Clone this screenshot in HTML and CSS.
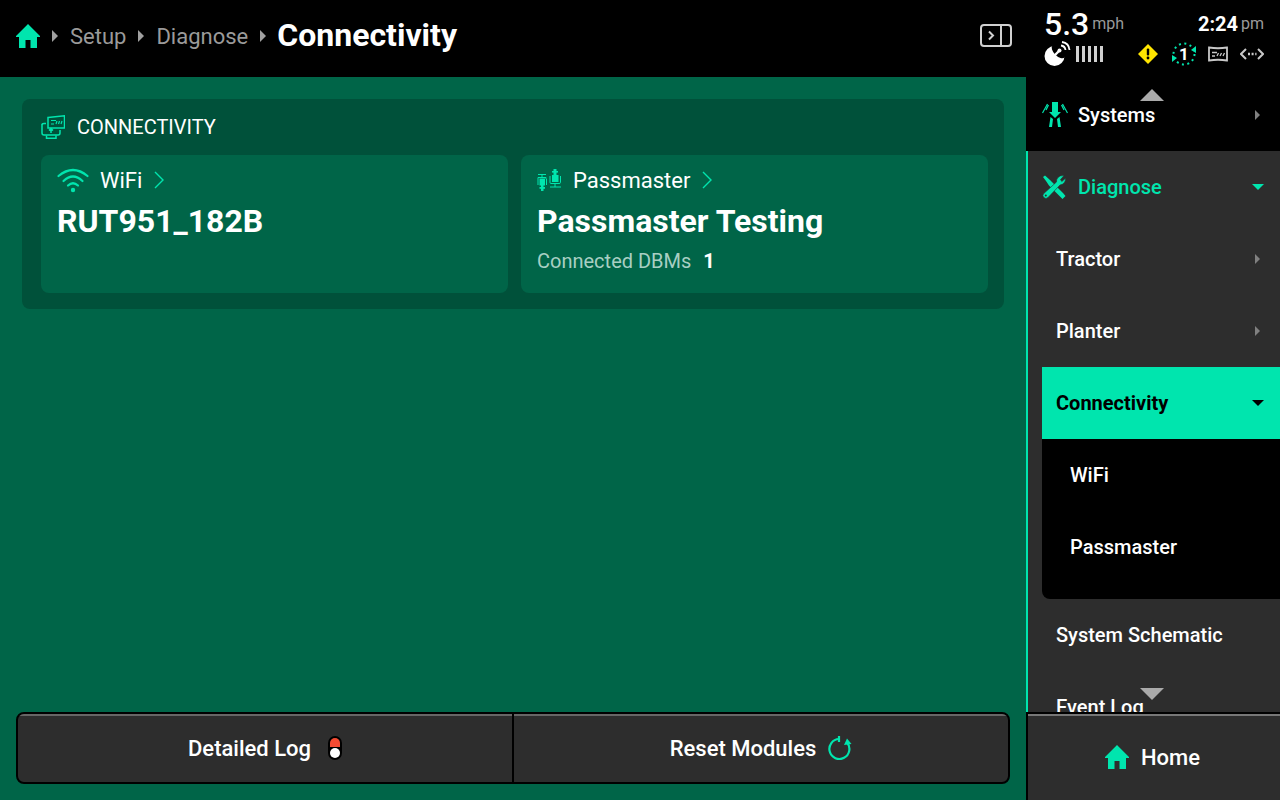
FILE: index.html
```html
<!DOCTYPE html>
<html lang="en">
<head>
    <meta charset="UTF-8">
    <title>Connectivity</title>
    <link rel="stylesheet" href="styles.css">
</head>
<body>
    <div class="app">
        <div class="left">
            <!-- Breadcrumb -->
            <header class="topbar">
                <svg class="home-icon" viewBox="0 0 24 24"><path d="M12 0 L24 12 V13 H21 V24 H14.5 V16 H9.5 V24 H3 V13 H0 V12 Z"/></svg>
                <span class="crumb-arrow"></span>
                <span class="crumb">Setup</span>
                <span class="crumb-arrow"></span>
                <span class="crumb">Diagnose</span>
                <span class="crumb-arrow"></span>
                <span class="crumb-current">Connectivity</span>
                <svg class="panel-toggle" viewBox="0 0 32 24" fill="none" stroke="#d0d0d0" stroke-width="2"><rect x="1" y="1" width="30" height="21" rx="3"/><path d="M21 1 V22"/><path d="M9 7.5 L13 11.5 L9 15.5"/></svg>
            </header>

            <main class="content">
                <section class="panel">
                    <div class="panel-title">
                        <svg class="title-icon" viewBox="0 0 24 24" fill="none" stroke="#00e5ae" stroke-width="1.5"><path d="M7 2.5 L23.5 0.8 V13 L7 13 Z"/><path d="M10 5.5 H15 M10 9 H13 M15 9 L16 6 M17.5 9 L18.5 6 M20 9 L21 6" stroke-width="1.2"/><path d="M1 9.5 V18 Q1 20 3 20 H17 Q19 20 19 18 V15"/><path d="M1 10 Q1 8.5 3 8.5 H5"/><path d="M10 18 V13.5 M8 15.5 L10 13.5 L12 15.5"/><path d="M5.5 20.5 V23.3 H15 V20.5"/></svg>
                        <span>CONNECTIVITY</span>
                    </div>
                    <div class="cards">
                        <div class="card">
                            <div class="card-head wifi-head">
                                <svg class="wifi-icon" viewBox="0 0 32 26" fill="none" stroke="#00e5ae" stroke-width="2.2" stroke-linecap="round"><path d="M1.5 9 Q16 -3 30.5 9"/><path d="M6.5 14 Q16 5 25.5 14"/><path d="M11 18.5 Q16 14 21 18.5"/><circle cx="16" cy="23" r="2.2" fill="#00e5ae" stroke="none"/></svg>
                                <span>WiFi</span>
                                <svg class="chev" viewBox="0 0 10 18" fill="none" stroke="#00e5ae" stroke-width="1.4"><path d="M1 1 L9 9 L1 17"/></svg>
                            </div>
                            <div class="card-value">RUT951_182B</div>
                        </div>
                        <div class="card">
                            <div class="card-head">
                                <svg class="pass-icon" viewBox="0 0 26 24" fill="none" stroke="#00e5ae" stroke-width="1"><path d="M1 6.5 H9 M5 6.5 V9"/><path d="M1 11 V9.5 H9 V11"/><rect x="2.5" y="10.5" width="5.5" height="7" fill="#00e5ae" stroke="none"/><rect x="4" y="17" width="2.5" height="6" fill="#00e5ae" stroke="none"/><rect x="2.5" y="19" width="5.5" height="1.8" fill="#00e5ae" stroke="none"/><path d="M1 11 V17 M9.5 11 V17"/><rect x="16.5" y="1" width="3" height="7" fill="#00e5ae" stroke="none"/><rect x="15" y="3" width="6" height="1.6" fill="#00e5ae" stroke="none"/><rect x="15" y="7" width="6.5" height="7" fill="#00e5ae" stroke="none"/><path d="M13 8 V14.5 Q13 15.5 14 15.5 H22 Q23.5 15.5 23.5 14.5 V8"/><path d="M18 15.5 V19 M13 19 H24"/></svg>
                                <span>Passmaster</span>
                                <svg class="chev" viewBox="0 0 10 18" fill="none" stroke="#00e5ae" stroke-width="1.4"><path d="M1 1 L9 9 L1 17"/></svg>
                            </div>
                            <div class="card-value">Passmaster Testing</div>
                            <div class="card-meta"><span>Connected DBMs</span><b>1</b></div>
                        </div>
                    </div>
                </section>

                <div class="actions">
                    <button type="button" class="action log-action">
                        Detailed Log
                        <svg class="log-icon" viewBox="0 0 14 24"><rect x="0" y="0" width="14" height="24" rx="7" fill="#000"/><path d="M2 11 V7 a5 5 0 0 1 10 0 V11 Z" fill="#f44b32"/><circle cx="7" cy="17" r="5" fill="#fff"/></svg>
                    </button>
                    <button type="button" class="action reset-action">
                        Reset Modules
                        <svg class="reset-icon" viewBox="0 0 24 24" fill="none" stroke="#00e5ae" stroke-width="2.2"><path d="M11 3 A10 10 0 1 0 19 6.5"/><path d="M11 0 V6"/><path d="M19 2.5 L23.5 8 L16 9 Z" fill="#00e5ae" stroke="none"/></svg>
                    </button>
                </div>
            </main>
        </div>

        <aside class="side">
            <div class="status">
                <div class="status-row">
                    <div class="status-pair"><span class="speed">5.3</span><span class="unit speed-unit">mph</span></div>
                    <div class="status-pair"><span class="clock">2:24</span><span class="unit">pm</span></div>
                </div>
                <div class="status-row icons-row">
                    <div class="gps">
                        <svg class="dish" viewBox="0 0 28 26"><circle cx="10.5" cy="15" r="10" fill="#fff"/><ellipse cx="14.5" cy="10.5" rx="8.5" ry="4.5" transform="rotate(45 14.5 10.5)" fill="#000"/><path d="M9.5 15.5 L15 10" stroke="#fff" stroke-width="2.4"/><circle cx="15.5" cy="9.5" r="2" fill="#fff"/><path d="M17 4.5 Q21 5 21.5 9 M18 1 Q25 2 25.5 9" fill="none" stroke="#fff" stroke-width="1.8"/></svg>
                        <div class="bars"><i></i><i></i><i></i><i></i><i></i></div>
                    </div>
                    <div class="status-icons">
                        <svg class="warn" viewBox="0 0 20 20"><path d="M10 0 L20 10 L10 20 L0 10 Z" fill="#ffe500"/><rect x="8.8" y="4.5" width="2.4" height="7" rx="1" fill="#000"/><circle cx="10" cy="14" r="1.4" fill="#000"/></svg>
                        <div class="cycle">
                            <svg viewBox="0 0 24 24" fill="none"><circle cx="12" cy="12" r="10.5" stroke="#00e5ae" stroke-width="2" stroke-dasharray="2 3.5"/><path d="M24 4 V11 L19 8 Z M0 20 V13 L5 16 Z" fill="#00e5ae"/></svg>
                            <span>1</span>
                        </div>
                        <svg class="screen" viewBox="0 0 20 16" fill="none" stroke="#c8c8c8" stroke-width="1.8"><path d="M1 1.5 Q10 3 19 1.5 V14.5 Q10 13 1 14.5 Z"/><path d="M4 6.500 H9 M4 10 H7 M9 10 L10.5 7 M12 10 L13.5 7 M15 10 L16.5 7" stroke-width="1.3"/></svg>
                        <svg class="link" viewBox="0 0 24 12" fill="none" stroke="#c8c8c8" stroke-width="2"><path d="M6 1 L1 6 L6 11 M18 1 L23 6 L18 11"/><path d="M8 6 H16.5" stroke-width="2.4" stroke-dasharray="2 1.6"/></svg>
                    </div>
                </div>
            </div>

            <div class="nav-wrap">
                <span class="scroll-up"></span>
                <div class="nav-top">
                    <div class="row">
                        <svg class="row-icon" viewBox="0 0 26 26" fill="#00e5ae"><path d="M10 0 H16 V10 H19 L13 16 L7 10 H10 Z"/><path d="M8.5 15 L11 17 L10 25 H7 Z M17.5 15 L15 17 L16 25 H19 Z"/><path d="M5.5 2 L0.5 11 M20.5 2 L25.5 11 M6.500 3 L4 8 M19.5 3 L22 8" fill="none" stroke="#00e5ae" stroke-width="1.2"/></svg>
                        <span class="row-label">Systems</span>
                        <span class="arrow-right"></span>
                    </div>
                </div>
                <nav class="nav">
                    <div class="row open">
                        <svg class="row-icon wrench" viewBox="0 0 24 24" fill="#00e5ae"><path d="M1 2 L3 0.5 L8 5 L21 18 L23.5 21 L20.5 24 L7 10.5 L4 6 Z"/><path d="M15.5 3 A6 6 0 0 1 22 0.8 L18.5 4.5 L19.8 6.5 L23.5 3.2 A6 6 0 0 1 18 10 L6 22.5 A2.8 2.8 0 1 1 1.8 18.5 L14.5 7 A6 6 0 0 1 15.5 3 Z" stroke="#2d2d2d" stroke-width="0.6"/><circle cx="3.8" cy="20.5" r="1" fill="#2d2d2d"/></svg>
                        <span class="row-label">Diagnose</span>
                        <span class="arrow-down"></span>
                    </div>
                    <div class="row sub"><span class="row-label">Tractor</span><span class="arrow-right"></span></div>
                    <div class="row sub"><span class="row-label">Planter</span><span class="arrow-right"></span></div>
                    <div class="row sub active"><span class="row-label">Connectivity</span><span class="arrow-down"></span></div>
                    <div class="subnav">
                        <div class="row"><span class="row-label">WiFi</span></div>
                        <div class="row"><span class="row-label">Passmaster</span></div>
                    </div>
                    <div class="row sub"><span class="row-label">System Schematic</span></div>
                    <div class="row sub"><span class="row-label">Event Log</span></div>
                </nav>
                <span class="scroll-down"></span>
            </div>

            <div class="home-btn">
                <svg class="home-icon small" viewBox="0 0 24 24"><path d="M12 0 L24 12 V13 H21 V24 H14.5 V16 H9.5 V24 H3 V13 H0 V12 Z"/></svg>
                <span>Home</span>
            </div>
        </aside>
    </div>
</body>
</html>
```

FILE: styles.css
```css
* {
    box-sizing: border-box;
}
body {
    margin: 0;
    width: 1280px;
    height: 800px;
    overflow: hidden;
    font-family: Roboto, "Liberation Sans", sans-serif;
    color: #fff;
    background: #000;
}
.app {
    display: flex;
    height: 800px;
}
.left {
    width: 1026px;
    display: flex;
    flex-direction: column;
}

/* top bar */
.topbar {
    height: 77px;
    background: #000;
    display: flex;
    align-items: center;
    padding: 0 14px 5px 16px;
}
.home-icon {
    width: 24px;
    height: 24px;
    fill: #00e5ae;
}
.crumb-arrow {
    width: 0;
    height: 0;
    border-left: 6px solid #a0a0a0;
    border-top: 6px solid transparent;
    border-bottom: 6px solid transparent;
    margin: 0 12px 0 12px;
}
.crumb {
    font-size: 22px;
    color: #9a9a9a;
}
.crumb-current {
    font-size: 32px;
    font-weight: 700;
    margin: 0 0 2px -1px;
}
.panel-toggle {
    width: 32px;
    height: 24px;
    margin-left: auto;
}

/* main */
.content {
    flex: 1;
    background: #006548;
    padding: 22px 16px 16px;
    display: flex;
    flex-direction: column;
    justify-content: space-between;
}
.panel {
    margin: 0 6px;
    width: 982px;
    height: 210px;
    background: #00513a;
    border-radius: 8px;
    padding: 0 16px 16px 19px;
}
.panel-title {
    height: 56px;
    display: flex;
    align-items: center;
    gap: 12px;
    font-size: 20px;
}
.title-icon {
    width: 24px;
    height: 24px;
}
.cards {
    display: flex;
    gap: 13px;
}
.card {
    width: 467px;
    height: 138px;
    background: #006548;
    border-radius: 8px;
    padding: 0 16px;
}
.card-head {
    height: 49px;
    display: flex;
    align-items: center;
    font-size: 22px;
    padding-top: 1px;
}
.wifi-icon {
    width: 32px;
    height: 26px;
    margin-right: 11px;
}
.pass-icon {
    width: 26px;
    height: 24px;
    margin-right: 10px;
}
.chev {
    width: 10px;
    height: 18px;
    margin-left: 12px;
}
.card-value {
    font-size: 32px;
    font-weight: 700;
    line-height: 34px;
}
.card-meta {
    margin-top: 11px;
    font-size: 20px;
    color: #a8cfc3;
    line-height: 24px;
}
.card-meta b {
    color: #fff;
    font-weight: 700;
    margin-left: 12px;
}

/* bottom buttons */
.actions {
    height: 72px;
    display: flex;
    background: #2d2d2d;
    border: 2px solid #000;
    border-radius: 8px;
    overflow: hidden;
}
.action {
    flex: 1;
    background: transparent;
    border: none;
    color: #fff;
    font-family: inherit;
    font-size: 22px;
    font-weight: 500;
    display: flex;
    align-items: center;
    justify-content: center;
    padding: 0;
    box-shadow: inset 0 2px 0 #666;
}
.log-action {
    gap: 17px;
}
.reset-action {
    gap: 12px;
}
.action + .action {
    border-left: 2px solid #000;
}
.log-icon {
    width: 14px;
    height: 24px;
}
.reset-icon {
    width: 24px;
    height: 24px;
}

/* right side */
.side {
    width: 254px;
    display: flex;
    flex-direction: column;
    background: #000;
}
.status {
    height: 79px;
    padding: 5px 16px 0 18px;
}
.status-row {
    display: flex;
    justify-content: space-between;
    align-items: center;
}
.status-pair {
    display: flex;
    align-items: center;
    height: 37px;
}
.speed {
    font-size: 32px;
    font-weight: 500;
}
.speed-unit {
    margin-left: 7px;
}
.clock {
    font-size: 20px;
    font-weight: 700;
}
.unit {
    font-size: 16px;
    color: #9a9a9a;
    margin-left: 3px;
}
.icons-row {
    height: 24px;
}
.gps {
    display: flex;
    align-items: center;
    gap: 4px;
}
.dish {
    width: 28px;
    height: 26px;
}
.bars {
    display: flex;
    gap: 3px;
}
.bars i {
    width: 3px;
    height: 16px;
    background: #d0d0d0;
}
.status-icons {
    display: flex;
    align-items: center;
}
.warn {
    width: 20px;
    height: 20px;
    margin-right: 14px;
}
.cycle {
    width: 24px;
    height: 24px;
    position: relative;
    margin-right: 12px;
}
.cycle svg {
    width: 24px;
    height: 24px;
    display: block;
}
.cycle span {
    position: absolute;
    inset: 0;
    display: flex;
    align-items: center;
    justify-content: center;
    font-size: 17px;
    font-weight: 700;
}
.screen {
    width: 20px;
    height: 16px;
    margin-right: 12px;
}
.link {
    width: 24px;
    height: 12px;
}

/* menu */
.nav-wrap {
    flex: 1;
    position: relative;
    min-height: 0;
    display: flex;
    flex-direction: column;
}
.row {
    height: 72px;
    display: flex;
    align-items: center;
    font-size: 20px;
    font-weight: 500;
    padding: 0 16px;
}
.row-icon {
    width: 26px;
    height: 26px;
    margin-right: 10px;
}
.row-icon.wrench {
    width: 24px;
    height: 24px;
    margin-right: 12px;
}
.row-label {
    flex: 1;
}
.nav {
    flex: 1;
    min-height: 0;
    overflow: hidden;
    background: #2d2d2d;
    border-left: 2px solid #00e5ae;
}
.nav .row {
    padding-left: 14px;
}
.nav .row.sub {
    padding-left: 28px;
}
.row.open {
    color: #00e5ae;
}
.nav .row.sub.active {
    margin-left: 14px;
    padding-left: 14px;
    background: #00e5ae;
    color: #000;
    font-weight: 700;
}
.row.active .arrow-down {
    border-top-color: #000;
}
.subnav {
    margin-left: 14px;
    height: 160px;
    background: #000;
    border-bottom-left-radius: 8px;
}
.nav .subnav .row {
    padding-left: 28px;
}
.arrow-right {
    width: 0;
    height: 0;
    border-left: 5px solid #808080;
    border-top: 5px solid transparent;
    border-bottom: 5px solid transparent;
    margin-right: 4px;
}
.arrow-down {
    width: 0;
    height: 0;
    border-top: 6px solid #00e5ae;
    border-left: 6.5px solid transparent;
    border-right: 6.5px solid transparent;
}
.scroll-up,
.scroll-down {
    position: absolute;
    left: 114px;
    width: 0;
    height: 0;
    border-left: 12px solid transparent;
    border-right: 12px solid transparent;
}
.scroll-up {
    top: 10px;
    border-bottom: 12px solid #aaa;
}
.scroll-down {
    bottom: 12px;
    border-top: 12px solid #aaa;
}
.home-btn {
    height: 88px;
    border-top: 2px solid #000;
    border-left: 2px solid #000;
    background: #2d2d2d;
    box-shadow: inset 0 2px 0 #777;
    display: flex;
    align-items: center;
    justify-content: center;
    gap: 12px;
    padding-right: 3px;
    font-size: 22px;
    font-weight: 500;
}
```
